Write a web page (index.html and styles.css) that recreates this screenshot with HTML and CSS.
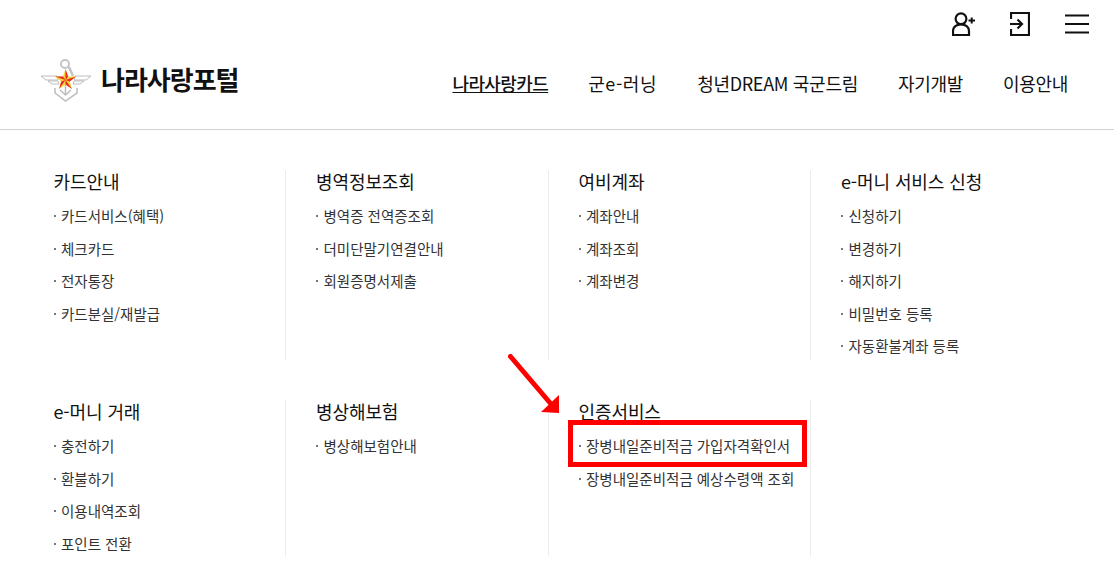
FILE: index.html
```html
<!DOCTYPE html>
<html lang="ko">
  <head>
    <meta charset="UTF-8" />
    <title>나라사랑포털</title>
    <link rel="stylesheet" href="styles.css" />
  </head>
  <body>
    <header class="top">
      <div class="util">
        <svg width="23" height="24" viewBox="0 0 23 24" fill="none" stroke="#111" stroke-width="2.2">
          <circle cx="9" cy="6.8" r="5.4" />
          <path d="M1 23V19C1 15 4.500 12.300 9 12.300S17 15 17 19V23Z" />
          <path d="M16.500 8.500H23M19.700 5.500V11.500" stroke-width="2" />
        </svg>
        <svg width="20" height="24" viewBox="0 0 20 24" fill="none" stroke="#111" stroke-width="2.2">
          <path d="M1 7V1H19V23H1V17" />
          <path d="M0 12H12M7.500 7.500L12 12L7.500 16.500" />
        </svg>
        <svg width="24" height="20" viewBox="0 0 24 20" fill="none" stroke="#111" stroke-width="2">
          <path d="M0 1.500H24M0 10H24M0 18.500H24" />
        </svg>
      </div>
      <div class="bar">
        <a class="logo">
          <svg width="52" height="43" viewBox="0 0 52 43">
            <path d="M1 17H17L18 21H6ZM51 17H35L34 21H46ZM8 22H18L19 25H12ZM44 22H34L33 25H40Z" fill="#fff" stroke="#bdbdbd" />
            <circle cx="25" cy="5" r="4" fill="none" stroke="#c4c4c4" stroke-width="2" />
            <path d="M29 8L33 17" fill="none" stroke="#c4c4c4" stroke-width="2.500" />
            <path d="M15 29V34L25.500 42L37 34V29M20 31L25.500 36L31 31M25.500 26V36" fill="none" stroke="#bdbdbd" stroke-width="1.500" />
            <polygon points="25.500,10 28.100,17.400 36,17.600 29.800,22.400 32,29.900 25.500,25.500 19,29.900 21.200,22.400 15,17.600 22.900,17.400" fill="#f6d432" />
            <path d="M25.500 21L25.500 10L28.100 17.400ZM25.500 21L36 17.600L29.800 22.400ZM25.500 21L32 29.900L25.500 25.500ZM25.500 21L19 29.900L21.200 22.400ZM25.500 21L15 17.600L22.900 17.400Z" fill="#e8292b" />
          </svg>
          <span>나라사랑포털</span>
        </a>
        <nav class="gnb">
          <a class="on">나라사랑카드</a>
          <a class="wide">군e-러닝</a>
          <a>청년DREAM 국군드림</a>
          <a>자기개발</a>
          <a>이용안내</a>
        </nav>
      </div>
    </header>

    <main class="menu">
      <section class="group">
        <h2>카드안내</h2>
        <ul>
          <li>카드서비스(혜택)</li>
          <li>체크카드</li>
          <li>전자통장</li>
          <li>카드분실/재발급</li>
        </ul>
      </section>
      <section class="group">
        <h2>병역정보조회</h2>
        <ul>
          <li>병역증 전역증조회</li>
          <li>더미단말기연결안내</li>
          <li>회원증명서제출</li>
        </ul>
      </section>
      <section class="group">
        <h2>여비계좌</h2>
        <ul>
          <li>계좌안내</li>
          <li>계좌조회</li>
          <li>계좌변경</li>
        </ul>
      </section>
      <section class="group">
        <h2>e-머니 서비스 신청</h2>
        <ul>
          <li>신청하기</li>
          <li>변경하기</li>
          <li>해지하기</li>
          <li>비밀번호 등록</li>
          <li>자동환불계좌 등록</li>
        </ul>
      </section>
      <section class="group">
        <h2>e-머니 거래</h2>
        <ul>
          <li>충전하기</li>
          <li>환불하기</li>
          <li>이용내역조회</li>
          <li>포인트 전환</li>
        </ul>
      </section>
      <section class="group">
        <h2>병상해보험</h2>
        <ul>
          <li>병상해보험안내</li>
        </ul>
      </section>
      <section class="group">
        <h2>인증서비스</h2>
        <ul>
          <li>장병내일준비적금 가입자격확인서</li>
          <li>장병내일준비적금 예상수령액 조회</li>
        </ul>
      </section>
      <section class="group last"></section>
    </main>

    <div class="mark-box"></div>
    <svg class="mark-arrow" width="60" height="66" viewBox="0 0 60 66">
      <path d="M2.500 2.500L43 50" stroke="#f00" stroke-width="5" stroke-linecap="round" />
      <polygon points="51,59 33,58 51,41" fill="#f00" />
    </svg>
  </body>
</html>
```

FILE: styles.css
```css
* {
  box-sizing: border-box;
}

html,
body {
  height: 562px;
  overflow: hidden;
}

body {
  margin: 0;
  background: #fff;
  color: #111;
  font-family: "Noto Sans CJK KR", "Noto Sans", sans-serif;
  position: relative;
}

.top {
  height: 130px;
  border-bottom: 1px solid #d2d2d2;
}

.util {
  display: flex;
  justify-content: flex-end;
  align-items: center;
  gap: 35px;
  height: 48px;
  padding-right: 25px;
}

.bar {
  display: flex;
  justify-content: space-between;
  align-items: center;
  height: 64px;
  padding: 0 46px 0 40px;
}

.logo {
  display: flex;
  align-items: center;
  gap: 9px;
}

.logo span {
  font-size: 26px;
  font-weight: 700;
  letter-spacing: -1px;
  margin-top: -3px;
}

.gnb {
  display: flex;
  gap: 40px;
  margin-top: 6px;
}

.gnb a {
  font-size: 18px;
  letter-spacing: -0.3px;
}

.gnb .on {
  font-weight: 500;
  letter-spacing: -0.6px;
  text-decoration: underline;
}

.gnb .wide {
  letter-spacing: 0.6px;
}

.menu {
  display: grid;
  grid-template-columns: repeat(4, 262.5px);
  grid-template-rows: 190px 156px;
  row-gap: 40px;
  padding: 40px 0 0 23.5px;
}

.group {
  padding-left: 30px;
  border-right: 1px solid #ececec;
}

.group.last,
.group:nth-child(4) {
  border-right: 0;
}

.group h2 {
  margin: 0 0 8px;
  font-size: 18px;
  font-weight: 400;
  letter-spacing: -0.1px;
  line-height: 22px;
}

.group ul {
  margin: 0;
  padding: 0;
  list-style: none;
}

.group li {
  height: 32.5px;
  line-height: 32.5px;
  padding-left: 7.5px;
  font-size: 14.5px;
  color: #333;
  position: relative;
}

.group li::before {
  content: "";
  position: absolute;
  left: 0;
  top: 15px;
  width: 2px;
  height: 2px;
  background: #777;
}

.mark-box {
  position: absolute;
  left: 568px;
  top: 420px;
  width: 239px;
  height: 47px;
  border: 5px solid #f00;
}

.mark-arrow {
  position: absolute;
  left: 508px;
  top: 354px;
}
```
